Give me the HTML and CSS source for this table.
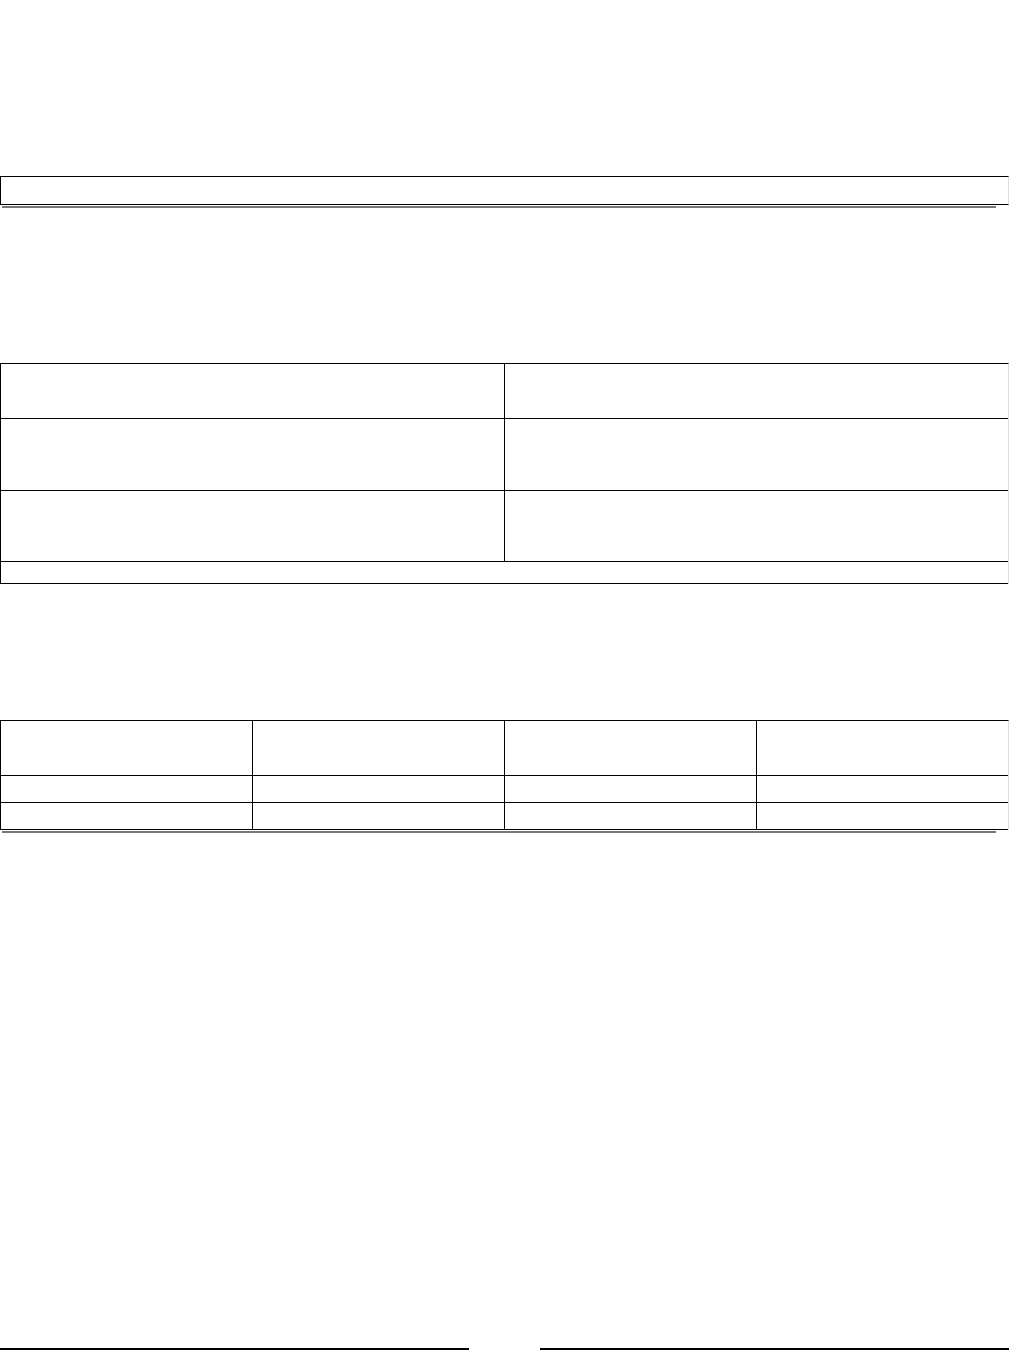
FILE: index.html
```html
<!DOCTYPE html>
<html lang="en">
<head>
    <meta charset="UTF-8">
    <meta name="viewport" content="width=device-width, initial-scale=1.0">
    <title>Form</title>
    <link rel="stylesheet" href="styles.css">
</head>
<body>
    <div class="page">
        <div class="header-box"></div>
        <div class="rule"></div>

        <div class="grid grid-two">
            <div class="cell row-tall"></div>
            <div class="cell row-tall last"></div>
            <div class="cell row-big"></div>
            <div class="cell row-big last"></div>
            <div class="cell row-mid"></div>
            <div class="cell row-mid last"></div>
            <div class="cell row-small full last"></div>
        </div>

        <div class="grid grid-four">
            <div class="cell row-tall"></div>
            <div class="cell row-tall"></div>
            <div class="cell row-tall"></div>
            <div class="cell row-tall last"></div>
            <div class="cell row-line"></div>
            <div class="cell row-line"></div>
            <div class="cell row-line"></div>
            <div class="cell row-line last"></div>
            <div class="cell row-line"></div>
            <div class="cell row-line"></div>
            <div class="cell row-line"></div>
            <div class="cell row-line last"></div>
        </div>
        <div class="rule"></div>

        <div class="signatures">
            <div class="sign-line"></div>
            <div class="sign-line"></div>
        </div>
    </div>
</body>
</html>
```

FILE: styles.css
```css
body {
    margin: 0;
    padding: 0;
    background-color: #fff;
    font-family: "Liberation Sans", Arial, sans-serif;
}

.page {
    display: flex;
    flex-direction: column;
    height: 1351px;
    padding-top: 176px;
    box-sizing: border-box;
    width: 1009px;
}

.header-box {
    height: 27px;
    border: 1px solid #000;
    border-right-color: #ddd;
}

.rule {
    margin: 1px 0 0 2px;
    width: 994px;
    height: 2px;
    background-color: #777;
}

.grid {
    display: grid;
    border-top: 1px solid #000;
    border-left: 1px solid #000;
    border-right: 1px solid #ddd;
}

.grid-two {
    margin-top: 155px;
    grid-template-columns: 504px 1fr;
}

.grid-four {
    margin-top: 136px;
    grid-template-columns: 252px 252px 252px 1fr;
}

.cell {
    border-bottom: 1px solid #000;
    border-right: 1px solid #000;
}

.cell.last {
    border-right: none;
}

.cell.full {
    grid-column: 1 / -1;
}

.row-tall { height: 54px; }
.row-big { height: 71px; }
.row-mid { height: 70px; }
.row-small { height: 21px; }
.row-line { height: 26px; }

.signatures {
    margin-top: auto;
    display: flex;
    justify-content: space-between;
    padding-bottom: 1px;
}

.sign-line {
    width: 469px;
    height: 2px;
    background-color: #000;
}
```
